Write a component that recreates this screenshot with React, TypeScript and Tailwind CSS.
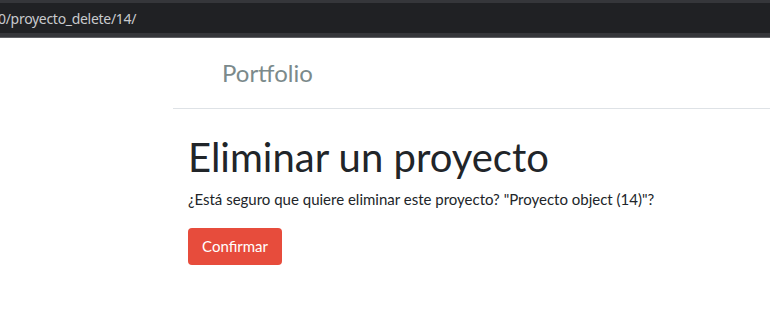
export default function App() {
  return (
    <div className="w-[770px] h-[312px] overflow-hidden bg-white font-['Lato',sans-serif]">
      {/* browser address bar */}
      <div className="h-[3px] bg-[#35363a]" />
      <div className="h-[30px] bg-[#202124] flex items-center overflow-hidden">
        <span className="-ml-[2px] text-[14px] tracking-[-0.3px] text-[#c8cacd] font-['Noto_Sans',sans-serif] whitespace-nowrap">
          0/proyecto_delete/14/
        </span>
      </div>
      <div className="h-[4px] bg-[#35363a]" />
      <div className="h-px bg-[#5f6064]" />

      <div className="flex">
        <div className="w-[173px] shrink-0" />
        <div className="flex-1">
          <nav className="h-[71px] border-b border-[#dee2e6] flex items-center pl-[49px]">
            <span className="text-[24px] text-[#7b8a8b]">Portfolio</span>
          </nav>
          <main className="pl-[15px] pt-[24px]">
            <h1 className="text-[40px] leading-[1.2] text-[#212529] mb-[7px]">Eliminar un proyecto</h1>
            <p className="text-[15px] leading-[1.5] text-[#212529] mb-[17px]">
              ¿Está seguro que quiere eliminar este proyecto? "Proyecto object (14)"?
            </p>
            <button className="w-[94px] h-[37px] rounded-[4px] bg-[#e74c3c] text-white text-[15px]">
              Confirmar
            </button>
          </main>
        </div>
      </div>
    </div>
  );
}
